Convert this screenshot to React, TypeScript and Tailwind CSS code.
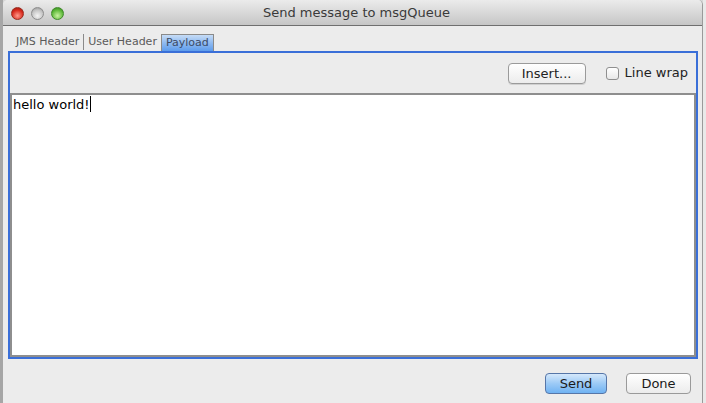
import React from 'react';

const font = { fontFamily: '"DejaVu Sans", "Liberation Sans", sans-serif' };

const TrafficLight = ({ color }: { color: 'red' | 'gray' | 'green' }) => {
  const bg =
    color === 'red'
      ? 'bg-[radial-gradient(circle_at_50%_70%,#ff9a8c,#d8291c_60%,#8e1a10)] border-[#9b2a1e]'
      : color === 'green'
        ? 'bg-[radial-gradient(circle_at_50%_70%,#c8f2a0,#5fb93a_60%,#2f7a1c)] border-[#3f8a2a]'
        : 'bg-[radial-gradient(circle_at_50%_70%,#f4f4f4,#c4c4c4_60%,#8a8a8a)] border-[#8d8d8d]';
  return <div className={`w-[13px] h-[13px] rounded-full border ${bg}`} />;
};

const App = () => {
  return (
    <div className="w-[706px] h-[403px] flex bg-[#d6d6d6] overflow-hidden" style={font}>
      <div className="w-[3px] bg-[#a6a6a6] shrink-0" />
      <div className="w-[700px] flex flex-col bg-[#ececec] rounded-t-[5px] overflow-hidden border-r border-[#9a9a9a]">
        {/* title bar */}
        <div className="h-[26px] shrink-0 flex items-center relative bg-gradient-to-b from-[#ebebeb] to-[#c6c6c6] border-b border-[#6f6f6f]">
          <div className="flex gap-[7px] pl-[8px] pt-[1px]">
            <TrafficLight color="red" />
            <TrafficLight color="gray" />
            <TrafficLight color="green" />
          </div>
          <div className="absolute inset-0 flex items-center justify-center text-[13px] text-[#3a3a3a] pl-[8px]">
            Send message to msgQueue
          </div>
        </div>

        {/* tabs */}
        <div className="flex items-end pl-[13px] h-[25px] shrink-0 text-[11px] text-[#5a5a5a]">
          <div className="h-[16px] flex items-center pr-[4px] border-r border-[#8a8a8a] mb-[1px]">JMS Header</div>
          <div className="h-[16px] flex items-center px-[4px] mb-[1px]">User Header</div>
          <div className="h-[17px] flex items-center px-[4px] border border-b-0 border-[#8a8a8a] bg-gradient-to-b from-[#c6dcf6] via-[#8fbaf0] to-[#5d9cec] text-[#3b4b66]">
            Payload
          </div>
        </div>

        {/* tab panel */}
        <div className="ml-[5px] mr-[4px] h-[308px] shrink-0 border-2 border-[#3a6fd8] flex flex-col">
          <div className="h-[40px] shrink-0 flex items-center justify-end pr-[8px] text-[13px] text-[#222]">
            <button className="w-[78px] h-[21px] rounded-[4px] border border-[#9a9a9a] bg-gradient-to-b from-white to-[#ececec] shadow-[0_1px_0_#d0d0d0] text-[13px] mr-[20px]">
              Insert...
            </button>
            <div className="w-[13px] h-[13px] rounded-[3px] border border-[#8f8f8f] bg-gradient-to-b from-white to-[#e8e8e8] mr-[6px]" />
            <span>Line wrap</span>
          </div>
          <div className="flex-1 bg-white border-2 border-[#8e8e8e] px-[1px] text-[13px] text-black">
            <span>hello world!</span>
            <span className="inline-block w-[1px] h-[16px] bg-black align-[-3px]" />
          </div>
        </div>

        {/* buttons */}
        <div className="flex-1 flex items-center justify-end gap-[19px] pr-[11px] pt-[4px]">
          <button className="w-[62px] h-[21px] rounded-[4px] border border-[#5676a8] bg-gradient-to-b from-[#d5e8fb] via-[#9ccaf6] to-[#6fb2f2] text-[13px] text-[#1a1a1a]">
            Send
          </button>
          <button className="w-[65px] h-[21px] rounded-[4px] border border-[#9a9a9a] bg-gradient-to-b from-white to-[#ececec] text-[13px] text-[#1a1a1a]">
            Done
          </button>
        </div>
      </div>
      <div className="flex-1 bg-[#e9e9e9]" />
    </div>
  );
};

export default App;
